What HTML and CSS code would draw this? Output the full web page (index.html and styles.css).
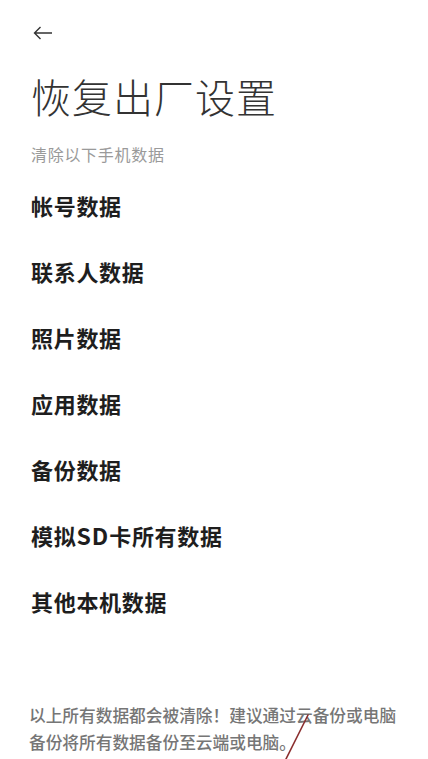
FILE: index.html
```html
<!DOCTYPE html>
<html lang="zh-CN">
<head>
    <meta charset="UTF-8">
    <meta name="viewport" content="width=device-width, initial-scale=1.0">
    <title>恢复出厂设置</title>
    <link rel="stylesheet" href="styles.css">
</head>
<body>
    <div class="page">
        <a class="back" href="#">
            <svg width="20" height="14" viewBox="0 0 20 14">
                <path d="M19 7H1.5M7.5 1L1.5 7l6 6" fill="none" stroke="#333" stroke-width="1.4"/>
            </svg>
        </a>

        <h1 class="title">恢复出厂设置</h1>
        <p class="subtitle">清除以下手机数据</p>

        <ul class="data-list">
            <li>帐号数据</li>
            <li>联系人数据</li>
            <li>照片数据</li>
            <li>应用数据</li>
            <li>备份数据</li>
            <li>模拟<span class="latin">SD</span>卡所有数据</li>
            <li>其他本机数据</li>
        </ul>

        <p class="notice">以上所有数据都会被清除！建议通过云备份或电脑备份将所有数据备份至云端或电脑。</p>

        <!-- pen stroke drawn over the notice -->
        <svg class="mark" width="40" height="50" viewBox="0 0 40 50">
            <path d="M33 2C27 14 19 30 10 48" fill="none" stroke="#8c3030" stroke-width="1.6" stroke-linecap="round"/>
        </svg>
    </div>
</body>
</html>
```

FILE: styles.css
```css
body {
    margin: 0;
    padding: 0;
    background-color: #fff;
    font-family: "Noto Sans CJK SC", "Noto Sans", sans-serif;
    color: #222;
}
.page {
    position: relative;
    height: 759px;
    padding: 0 31px;
    overflow: hidden;
}
.back {
    display: block;
    width: 20px;
    height: 14px;
    margin: 26px 0 0 2px;
}
.back svg {
    display: block;
}
.title {
    margin: 31px 0 0;
    font-size: 40px;
    line-height: 50px;
    font-weight: 300;
    letter-spacing: 1px;
    color: #333;
}
.subtitle {
    margin: 22px 0 0;
    font-size: 16px;
    line-height: 22px;
    letter-spacing: 0.7px;
    color: #9a9a9a;
}
.data-list {
    list-style: none;
    margin: 7px 0 0;
    padding: 0;
}
.data-list li {
    font-size: 22px;
    line-height: 66px;
    font-weight: 700;
    letter-spacing: 0.7px;
    color: #1e1e1e;
}
.data-list .latin {
    font-size: 23px;
    letter-spacing: 1px;
}
.notice {
    margin: 68px 0 0 -2px;
    font-size: 16.7px;
    line-height: 27px;
    font-weight: 500;
    color: #767676;
}
.mark {
    position: absolute;
    left: 275px;
    top: 713px;
}
```
